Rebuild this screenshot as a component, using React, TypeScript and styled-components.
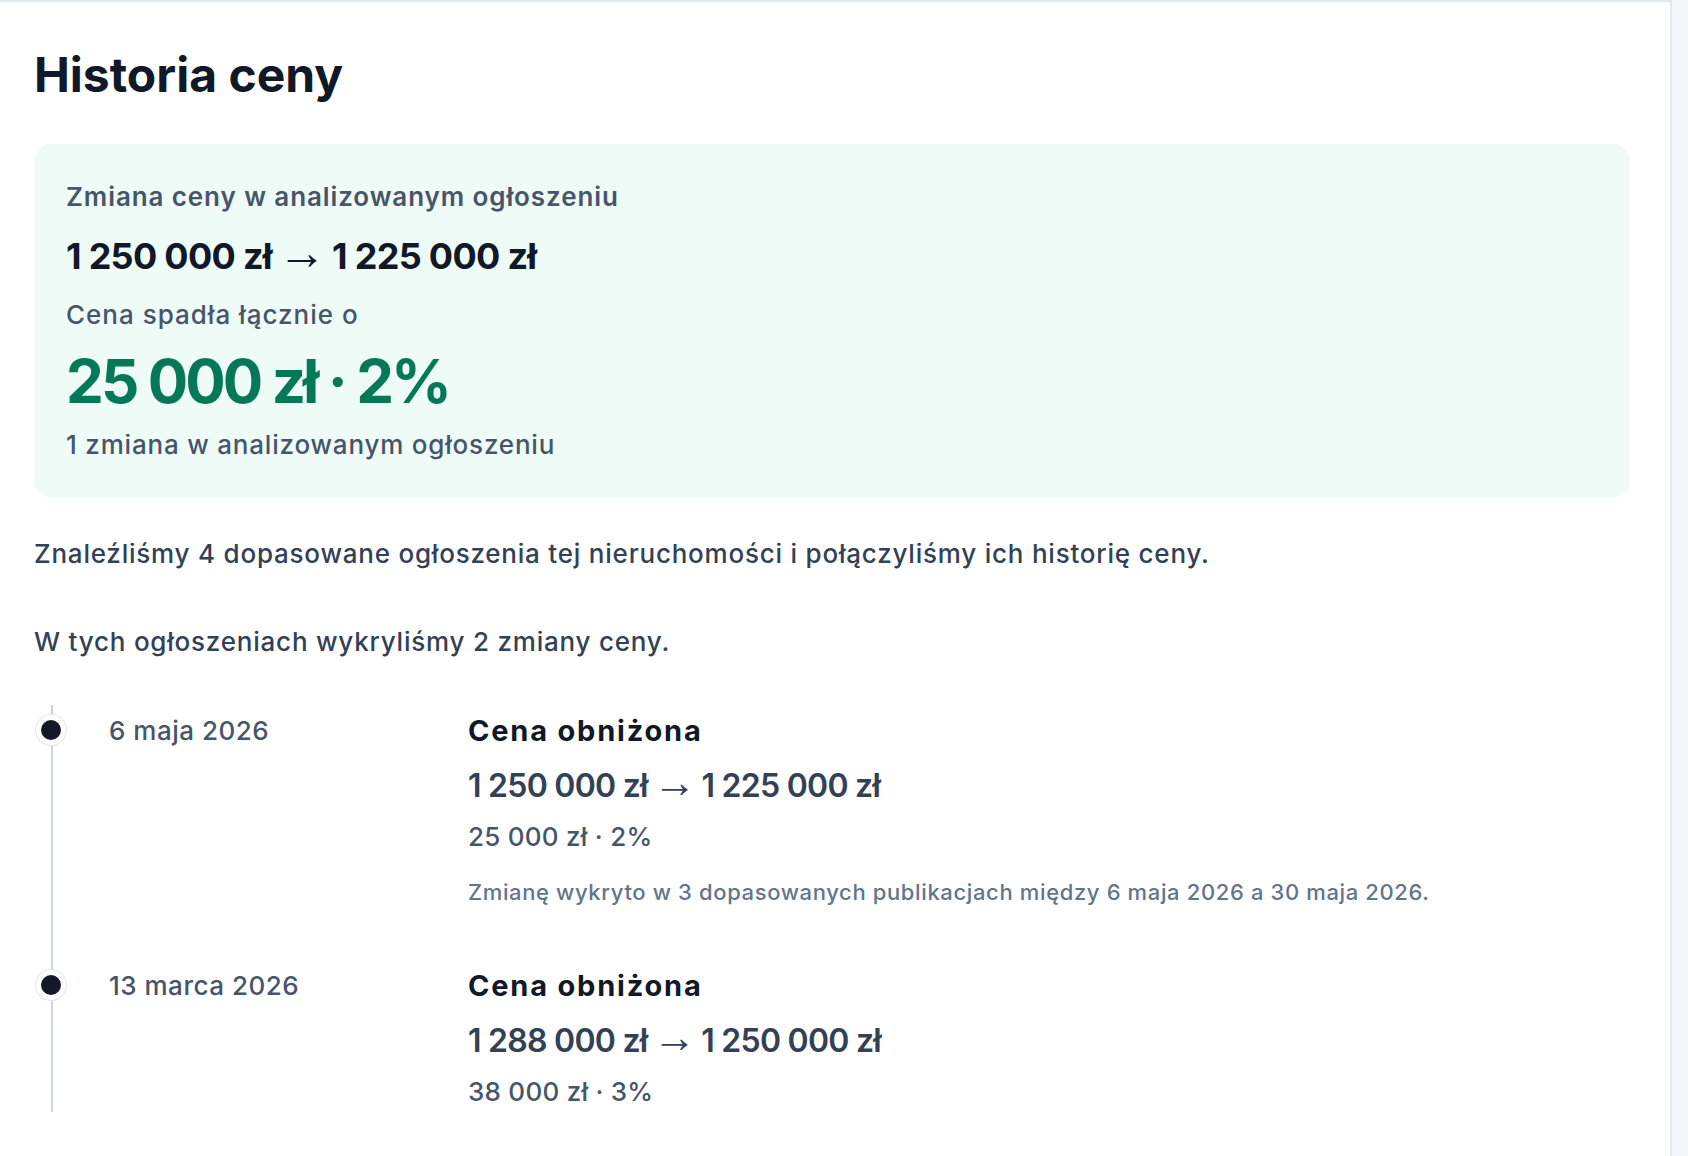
import styled, { createGlobalStyle } from 'styled-components';

const GlobalStyle = createGlobalStyle`
    html, body {
        margin: 0;
        padding: 0;
        background: #f4f6f9;
    }
    body {
        font-family: "Inter", "Noto Sans", sans-serif;
        -webkit-font-smoothing: antialiased;
    }
`;

const Page = styled.div`
    display: flex;
    min-height: 100vh;
    padding-right: 16px;
    box-sizing: border-box;
`;

const Card = styled.section`
    flex: 1;
    background: #ffffff;
    border-top: 2px solid #e2e8f0;
    border-right: 2px solid #e2e8f0;
    padding: 44px 40px 40px 34px;
`;

const Title = styled.h2`
    margin: 0;
    font-size: 48px;
    line-height: 58px;
    font-weight: 700;
    letter-spacing: 0;
    color: #111827;
`;

const Summary = styled.div`
    margin-top: 40px;
    background: #effbf6;
    border-radius: 18px;
    padding: 35px 32px 35px;
    display: flex;
    flex-direction: column;
`;

const SummaryLabel = styled.div`
    font-size: 26px;
    line-height: 36px;
    font-weight: 600;
    color: #475569;
    letter-spacing: 0.9px;
`;

const SummaryPrices = styled.div`
    margin-top: 19px;
    font-size: 36px;
    line-height: 44px;
    font-weight: 700;
    color: #111827;
    letter-spacing: -0.7px;
`;

// thin, long arrow between the old and new price
const Arrow = styled.span`
    font-family: "Liberation Sans", sans-serif;
    font-weight: 400;
    font-size: 1.35em;
    line-height: 0;
    vertical-align: -0.01em;
    letter-spacing: 0;
    margin: 0 -2px;
`;

const SummaryText = styled.div<{ $gap: number; $spacing: number }>`
    margin-top: ${(p) => p.$gap}px;
    font-size: 26px;
    line-height: 36px;
    font-weight: 500;
    color: #475569;
    letter-spacing: ${(p) => p.$spacing}px;
`;

const Drop = styled.div`
    margin-top: 12px;
    font-size: 60px;
    line-height: 72px;
    font-weight: 700;
    color: #047857;
    letter-spacing: -2.9px;
`;

const Lead = styled.p<{ $gap: number }>`
    margin: ${(p) => p.$gap}px 0 0;
    font-size: 26px;
    line-height: 36px;
    font-weight: 500;
    color: #334155;
    letter-spacing: 0.78px;
`;

const Timeline = styled.ol`
    position: relative;
    list-style: none;
    margin: 45px 0 0;
    padding: 8px 0 2px;
    display: flex;
    flex-direction: column;
    gap: 60px;

    &::before {
        content: '';
        position: absolute;
        left: 17px;
        top: 0;
        bottom: 0;
        width: 2px;
        background: #cbd5e1;
    }
`;

const Entry = styled.li`
    position: relative;
    display: grid;
    grid-template-columns: 75px 359px 1fr;
    align-items: start;
`;

const Dot = styled.span`
    display: block;
    width: 20px;
    height: 20px;
    margin: 2px 0 0 2px;
    border-radius: 50%;
    background: #111827;
    border: 5px solid #ffffff;
    box-shadow: 0 0 0 1px #e2e8f0;
`;

const EntryDate = styled.div`
    font-size: 26px;
    line-height: 36px;
    font-weight: 500;
    color: #475569;
    letter-spacing: 0.5px;
`;

const EntryBody = styled.div`
    display: flex;
    flex-direction: column;
`;

const EntryTitle = styled.div`
    font-size: 29px;
    line-height: 36px;
    font-weight: 700;
    color: #111827;
    letter-spacing: 1.8px;
`;

const EntryPrices = styled.div`
    margin-top: 17px;
    font-size: 32px;
    line-height: 40px;
    font-weight: 600;
    color: #334155;
    letter-spacing: -0.75px;
`;

const EntryDiff = styled.div`
    margin-top: 13px;
    font-size: 26px;
    line-height: 36px;
    font-weight: 500;
    color: #475569;
    letter-spacing: 0.25px;
`;

const EntryNote = styled.div`
    margin-top: 21px;
    font-size: 22px;
    line-height: 32px;
    font-weight: 500;
    color: #64748b;
    letter-spacing: 0.63px;
`;

type Change = {
    date: string;
    from: string;
    to: string;
    diff: string;
    note?: string;
};

const changes: Change[] = [
    {
        date: '6 maja 2026',
        from: '1\u00a0250\u00a0000 zł',
        to: '1\u00a0225\u00a0000 zł',
        diff: '25\u00a0000 zł · 2%',
        note: 'Zmianę wykryto w 3 dopasowanych publikacjach między 6 maja 2026 a 30 maja 2026.',
    },
    {
        date: '13 marca 2026',
        from: '1\u00a0288\u00a0000 zł',
        to: '1\u00a0250\u00a0000 zł',
        diff: '38\u00a0000 zł · 3%',
    },
];

const PriceHistory = () => {
    return (
        <Card>
            <Title>Historia ceny</Title>

            <Summary>
                <SummaryLabel>Zmiana ceny w analizowanym ogłoszeniu</SummaryLabel>
                <SummaryPrices>
                    1&nbsp;250&nbsp;000 zł <Arrow>→</Arrow> 1&nbsp;225&nbsp;000 zł
                </SummaryPrices>
                <SummaryText $gap={19} $spacing={1}>Cena spadła łącznie o</SummaryText>
                <Drop>25&nbsp;000 zł · 2%</Drop>
                <SummaryText $gap={10} $spacing={0.8}>1 zmiana w analizowanym ogłoszeniu</SummaryText>
            </Summary>

            <Lead $gap={38}>
                Znaleźliśmy 4 dopasowane ogłoszenia tej nieruchomości i połączyliśmy ich historię ceny.
            </Lead>
            <Lead $gap={52}>W tych ogłoszeniach wykryliśmy 2 zmiany ceny.</Lead>

            <Timeline>
                {changes.map((c) => (
                    <Entry key={c.date}>
                        <Dot />
                        <EntryDate>{c.date}</EntryDate>
                        <EntryBody>
                            <EntryTitle>Cena obniżona</EntryTitle>
                            <EntryPrices>
                                {c.from} <Arrow>→</Arrow> {c.to}
                            </EntryPrices>
                            <EntryDiff>{c.diff}</EntryDiff>
                            {c.note && <EntryNote>{c.note}</EntryNote>}
                        </EntryBody>
                    </Entry>
                ))}
            </Timeline>
        </Card>
    );
};

const App = () => (
    <>
        <GlobalStyle />
        <Page>
            <PriceHistory />
        </Page>
    </>
);

export default App;
